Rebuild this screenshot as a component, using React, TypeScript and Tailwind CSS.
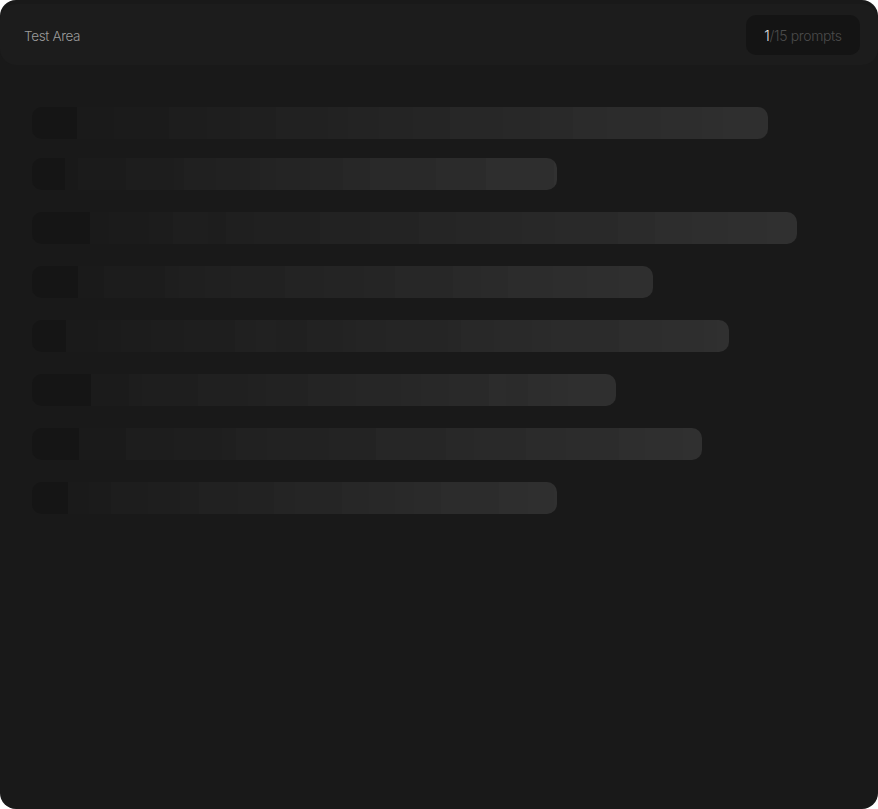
import React from 'react';

// bar widths in px, measured from the left edge of the list
const bars = [736, 525, 765, 621, 697, 584, 670, 525];

// small deterministic generator so the banding stays put between renders
function makeRand(seed: number) {
  let s = seed;
  return () => {
    s = (s * 9301 + 49297) % 233280;
    return s / 233280;
  };
}

function segmentsFor(width: number, seed: number) {
  const rand = makeRand(seed);
  const segs: { w: number; color: string }[] = [];
  const head = 30 + Math.round(rand() * 36);
  segs.push({ w: head, color: '#151515' });
  let x = head;
  while (x < width) {
    let w = 10 + Math.round(rand() * 30);
    if (width - x < 20) w = width - x;
    w = Math.min(w, width - x);
    const t = (x + w / 2) / width;
    const base = 0x18 + t * (0x30 - 0x18);
    const v = Math.max(0x16, Math.min(0x31, Math.round(base + (rand() - 0.5) * 1.5)));
    const hex = v.toString(16).padStart(2, '0');
    segs.push({ w, color: `#${hex}${hex}${hex}` });
    x += w;
  }
  return segs;
}

function SkeletonBar({ width, seed }: { width: number; seed: number }) {
  const segs = segmentsFor(width, seed);
  return (
    <div className="flex h-8 overflow-hidden rounded-[10px]" style={{ width }}>
      {segs.map((s, i) => (
        <div key={i} className="h-full shrink-0" style={{ width: s.w, backgroundColor: s.color }} />
      ))}
    </div>
  );
}

export default function App() {
  return (
    <div
      className="h-[809px] w-[878px] overflow-hidden rounded-2xl bg-[#191919] pt-1"
      style={{ fontFamily: 'Inter, "Noto Sans", sans-serif' }}
    >
      {/* header */}
      <div className="flex h-[61px] items-center justify-between rounded-2xl bg-[#1c1c1c] pl-6 pr-[18px]">
        <span className="pt-1 text-[13.5px] font-light tracking-tight text-[#9b9b9b]">Test Area</span>
        <div className="flex h-10 w-[114px] items-center justify-center rounded-[10px] bg-[#141414] pt-0.5 text-[14px] font-light tracking-tight">
          <span className="text-[#e6e6e6]">1</span>
          <span className="text-[#4b4b4b]">/15 prompts</span>
        </div>
      </div>

      {/* skeleton lines */}
      <div className="flex flex-col gap-[22px] pl-8 pt-[42px]">
        {bars.map((w, i) => (
          <div key={i} className={i === 1 ? '-mt-[3px]' : ''}>
            <SkeletonBar width={w} seed={i * 17 + 5} />
          </div>
        ))}
      </div>
    </div>
  );
}
